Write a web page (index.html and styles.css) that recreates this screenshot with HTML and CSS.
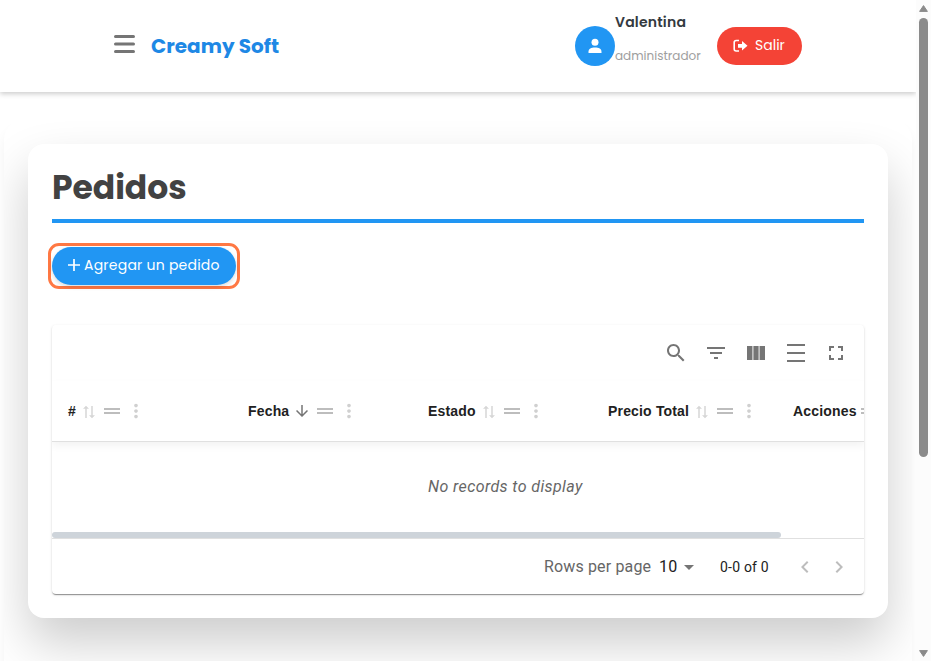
FILE: index.html
```html
<!DOCTYPE html>
<html lang="es">
<head>
<meta charset="utf-8">
<title>Creamy Soft</title>
<link rel="stylesheet" href="styles.css">
</head>
<body>
<svg class="defs" width="0" height="0">
  <symbol id="sort" viewBox="0 0 12 14"><path d="M3 13V2M9 1v11" fill="none" stroke="currentColor" stroke-width="1.500"/><path d="M0 3.800 3 .8l3 3zM6 10.200l3 3 3-3z" fill="currentColor"/></symbol>
  <symbol id="down" viewBox="0 0 24 24"><path fill="currentColor" d="m20 12-1.410-1.410L13 16.170V4h-2v12.170l-5.580-5.590L4 12l8 8z"/></symbol>
  <symbol id="drag" viewBox="0 0 24 24"><path fill="currentColor" d="M20 9H4v2h16V9zM4 15h16v-2H4v2z"/></symbol>
  <symbol id="more" viewBox="0 0 24 24"><path fill="currentColor" d="M12 8c1.100 0 2-.9 2-2s-.9-2-2-2-2 .9-2 2 .9 2 2 2zm0 2c-1.100 0-2 .9-2 2s.9 2 2 2 2-.9 2-2-.9-2-2-2zm0 6c-1.100 0-2 .9-2 2s.9 2 2 2 2-.9 2-2-.9-2-2-2z"/></symbol>
</svg>
<div class="window">
  <div class="page">
    <header class="topbar">
      <svg class="burger" width="21" height="18" viewBox="0 0 21 18"><path d="M1.500 1.500h18M1.500 9h18M1.500 16.500h18" stroke="#757575" stroke-width="3" stroke-linecap="round"/></svg>
      <span class="brand">Creamy Soft</span>
      <div class="avatar"><svg width="14" height="16" viewBox="0 0 14 16"><circle cx="7" cy="4.300" r="3.500" fill="#fff"/><path fill="#fff" d="M.5 15v-1.200C.5 10.800 3.200 9.500 7 9.500s6.500 1.300 6.500 4.300V15z"/></svg></div>
      <div class="user"><span class="name">Valentina</span><span class="role">administrador</span></div>
      <button class="logout"><svg width="15" height="14" viewBox="0 0 15 14"><path d="M6 1.500H3.200Q1.200 1.500 1.200 3.500v6.500q0 2 2 2H6" fill="none" stroke="#fff" stroke-width="1.600"/><path d="M5 4.900h4V2l5.500 4.800L9 11.600V8.700H5z" fill="#fff"/></svg><span>Salir</span></button>
    </header>
    <main class="content">
      <section class="card">
        <h1>Pedidos</h1>
        <div class="focus"><button class="add"><svg width="12" height="12" viewBox="0 0 12 12"><path d="M6 0v12M0 6h12" stroke="#fff" stroke-width="1.700"/></svg><span>Agregar un pedido</span></button></div>
        <div class="table">
          <div class="tools">
            <svg viewBox="0 0 24 24"><path d="M15.500 14h-.79l-.28-.27C15.410 12.590 16 11.110 16 9.500 16 5.910 13.090 3 9.500 3S3 5.910 3 9.500 5.910 16 9.500 16c1.610 0 3.090-.59 4.230-1.570l.27.28v.79l5 4.990L20.490 19l-4.990-5zm-6 0C7.010 14 5 11.990 5 9.500S7.010 5 9.500 5 14 7.010 14 9.500 11.990 14 9.500 14z"/></svg>
            <svg viewBox="0 0 24 24"><path d="M10 18h4v-2h-4v2zM3 6v2h18V6H3zm3 7h12v-2H6v2z"/></svg>
            <svg viewBox="0 0 24 24"><path d="M3 5h5v14H3zM9.500 5h5v14h-5zM16 5h5v14h-5z"/><path opacity=".45" d="M8 5h1.500v14H8zM14.500 5H16v14h-1.500z"/></svg>
            <svg viewBox="0 0 24 24"><path d="M3 3h18v2H3zM3 11h18v2H3zM3 19h18v2H3z"/></svg>
            <svg viewBox="0 0 24 24"><path d="M7 14H5v5h5v-2H7v-3zm-2-4h2V7h3V5H5v5zm12 7h-3v2h5v-5h-2v3zM14 5v2h3v3h2V5h-5z"/></svg>
          </div>
          <div class="head">
            <div class="th"><span>#</span><svg class="sort"><use href="#sort"/></svg><svg class="drag"><use href="#drag"/></svg><svg class="more"><use href="#more"/></svg></div>
            <div class="th"><span>Fecha</span><svg class="down"><use href="#down"/></svg><svg class="drag"><use href="#drag"/></svg><svg class="more"><use href="#more"/></svg></div>
            <div class="th"><span>Estado</span><svg class="sort"><use href="#sort"/></svg><svg class="drag"><use href="#drag"/></svg><svg class="more"><use href="#more"/></svg></div>
            <div class="th wide"><span>Precio Total</span><svg class="sort"><use href="#sort"/></svg><svg class="drag"><use href="#drag"/></svg><svg class="more"><use href="#more"/></svg></div>
            <div class="th last"><span>Acciones</span><svg class="drag"><use href="#drag"/></svg></div>
          </div>
          <div class="empty"><span>No records to display</span></div>
          <div class="hscroll"><div class="hthumb"></div></div>
          <div class="foot">
            <span class="rows">Rows per page</span><span class="count">10</span>
            <svg class="caret" width="10" height="5" viewBox="0 0 10 5"><path d="M0 0h10L5 5z" fill="#757575"/></svg>
            <span class="range">0-0 of 0</span>
            <svg class="prev" width="24" height="24" viewBox="0 0 24 24"><path d="M15.410 7.410 14 6l-6 6 6 6 1.410-1.410L10.830 12z" fill="#bdbdbd"/></svg>
            <svg class="next" width="24" height="24" viewBox="0 0 24 24"><path d="M10 6 8.590 7.410 13.170 12l-4.580 4.590L10 18l6-6z" fill="#bdbdbd"/></svg>
          </div>
        </div>
      </section>
    </main>
  </div>
  <div class="vscroll">
    <svg width="9" height="7" viewBox="0 0 9 7"><path d="M4.500.6 8.400 6.400H.6z" fill="#8b8b8b" stroke="#8b8b8b" stroke-linejoin="round"/></svg>
    <div class="vthumb"></div>
    <svg class="bottom" width="9" height="7" viewBox="0 0 9 7"><path d="M4.500 6.400.6.6h7.800z" fill="#8b8b8b" stroke="#8b8b8b" stroke-linejoin="round"/></svg>
  </div>
</div>
</body>
</html>
```
FILE: styles.css
```css
* { box-sizing: border-box; }
body { margin: 0; background: #fff; font-family: Poppins, Inter, sans-serif; }
svg { flex: none; display: block; }
.defs { position: absolute; }
button { border: 0; font: inherit; color: #fff; display: flex; align-items: center; white-space: nowrap; }
.window { display: flex; width: 931px; height: 661px; overflow: hidden; }
.page { width: 916px; height: 661px; overflow: hidden; }
.topbar { display: flex; align-items: center; height: 92px; padding-left: 114px; box-shadow: 0 2px 5px rgba(0,0,0,.2); position: relative; }
.burger { margin-top: -4px; }
.brand { width: 424px; margin-left: 16px; font-size: 20px; font-weight: 700; color: #1e88e5; }
.avatar { display: flex; align-items: center; justify-content: center; width: 40px; height: 40px; border-radius: 50%; background: #2196f3; }
.user { display: flex; flex-direction: column; width: 102px; height: 92px; padding: 11px 0 0 0; }
.name { font-size: 14px; line-height: 22px; font-weight: 600; color: #343a40; letter-spacing: .2px; }
.role { margin-top: 12px; font-size: 12px; line-height: 22px; color: #9e9e9e; }
.logout { width: 85px; height: 38px; padding: 0 0 1px 16px; border-radius: 19px; background: #f44336; font-size: 14px; gap: 7px; }
.content { width: 908px; height: 600px; margin: 28px 0 0 4px; padding: 24px; border-radius: 20px; overflow: hidden; box-shadow: 0 8px 12px rgba(0,0,0,.05); }
.card { width: 860px; height: 474px; padding: 24px; border-radius: 16px; background: #fff; box-shadow: 0 25px 50px rgba(0,0,0,.2); }
h1 { height: 55px; margin: 0; border-bottom: 4px solid #2196f3; color: #424242; font-size: 33px; line-height: 39px; letter-spacing: -.05px; }
.focus { width: 192px; height: 46px; margin: 20px 0 0 -4px; padding: 1px; border: 3px solid #ff7843; border-radius: 11px; }
.add { width: 184px; height: 38px; padding: 0 0 2px 16px; border-radius: 19px; background: #2196f3; font-size: 14px; gap: 4px; box-shadow: 0 2px 4px rgba(0,0,0,.15); }
.add span { letter-spacing: .23px; }
.table { width: 812px; height: 269px; margin-top: 36px; border-radius: 4px; overflow: hidden; box-shadow: 0 2px 1px -1px rgba(0,0,0,.25), 0 1px 1px rgba(0,0,0,.18), 0 1px 3px rgba(0,0,0,.12); }
.tools { display: flex; justify-content: flex-end; gap: 16px; height: 56px; padding: 16px 16px 0; fill: #757575; }
.tools svg { width: 24px; height: 24px; }
.head { display: flex; height: 61px; border-bottom: 1px solid #e0e0e0; box-shadow: 0 4px 8px rgba(0,0,0,.05); }
.th { display: flex; align-items: center; flex: 0 0 180px; height: 60px; padding-left: 16px; font: 700 14px "Liberation Sans", Arial, sans-serif; color: #212121; letter-spacing: .17px; white-space: nowrap; }
.wide { flex-basis: 185px; }
.sort { width: 12px; height: 14px; margin: 1px 5px 0 7px; color: #d6d6d6; }
.down { width: 18px; height: 18px; margin: 0 2px 0 4px; color: #757575; }
.drag { width: 24px; height: 24px; color: #bdbdbd; }
.more { width: 22px; height: 22px; margin-left: 1px; color: #d0d0d0; }
.last .drag { margin-left: 0; }
.empty { display: flex; align-items: center; height: 90px; padding: 0 0 2px 376px; color: #666; font: italic 16px Roboto, sans-serif; letter-spacing: .4px; }
.hscroll { height: 7px; border-bottom: 1px solid #e0e0e0; }
.hthumb { width: 729px; height: 6px; border-radius: 3px; background: #ced4da; }
.foot { display: flex; align-items: center; height: 55px; padding-left: 492px; font-family: Roboto, sans-serif; font-size: 16px; color: #212121; white-space: nowrap; }
.rows { width: 115px; color: #666; letter-spacing: .15px; }
.count { width: 25px; letter-spacing: .15px; }
.caret { margin-top: 2px; }
.range { width: 73px; margin-left: 26px; font-size: 14px; letter-spacing: .2px; }
.prev { margin-top: 1px; }
.next { margin: 1px 0 0 10px; }
.vscroll { display: flex; flex-direction: column; width: 15px; height: 661px; padding: 5px 3px 4px; background: #fcfcfc; }
.vthumb { width: 9px; height: 439px; margin-top: 6px; border-radius: 5px; background: #8b8b8b; }
.bottom { margin-top: auto; }
```
